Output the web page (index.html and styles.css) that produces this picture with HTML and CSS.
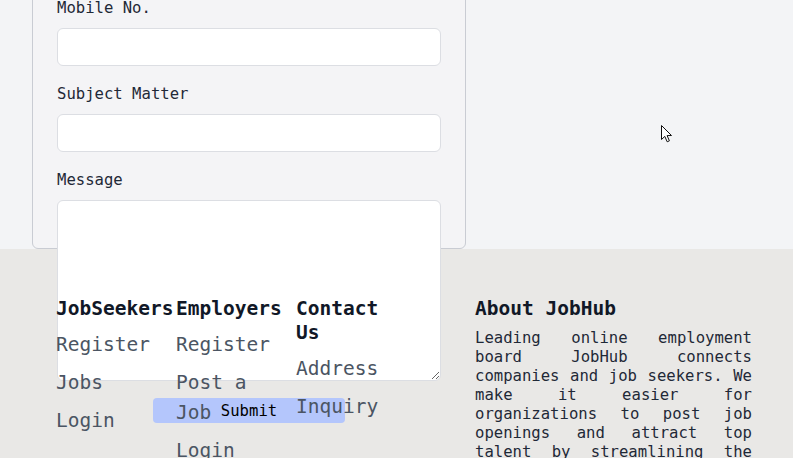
FILE: index.html
```html
<!DOCTYPE html>
<html lang="en">
<head>
<meta charset="utf-8">
<title>Contact - JobHub</title>
<link rel="stylesheet" href="styles.css">
</head>
<body>
<main class="contact">
  <form class="card">
    <div class="field">
      <label class="label" for="mobile">Mobile No.</label>
      <input class="input" id="mobile" type="text">
    </div>
    <div class="field">
      <label class="label" for="subject">Subject Matter</label>
      <input class="input" id="subject" type="text">
    </div>
    <div class="field">
      <label class="label" for="message">Message</label>
      <div class="area-wrap"><textarea class="area" id="message"></textarea></div>
    </div>
    <div class="actions"><button class="submit" type="button">Submit</button></div>
  </form>
</main>
<footer class="footer">
  <div class="cols">
    <div class="col">
      <h3 class="col-title">JobSeekers</h3>
      <ul class="links">
        <li><a href="#">Register</a></li>
        <li><a href="#">Jobs</a></li>
        <li><a href="#">Login</a></li>
      </ul>
    </div>
    <div class="col">
      <h3 class="col-title">Employers</h3>
      <ul class="links">
        <li><a href="#">Register</a></li>
        <li><a href="#">Post a Job</a></li>
        <li><a href="#">Login</a></li>
      </ul>
    </div>
    <div class="col">
      <h3 class="col-title">Contact Us</h3>
      <ul class="links">
        <li><a href="#">Address</a></li>
        <li><a href="#">Inquiry</a></li>
      </ul>
    </div>
  </div>
  <div class="about">
    <h3 class="col-title">About JobHub</h3>
    <p class="about-text">Leading online employment board JobHub connects companies and job seekers. We make it easier for organizations to post job openings and attract top talent by streamlining the hiring process for everyone involved.</p>
  </div>
</footer>
<svg class="cursor" width="13" height="20" viewBox="0 0 13 20" aria-hidden="true">
  <path d="M1.5 1.5 L1.5 15.5 L4.8 12.4 L7.2 17.8 L9.4 16.8 L7.1 11.6 L11.5 11.5 Z" fill="#fff" stroke="#111" stroke-width="1" stroke-linejoin="round"/>
</svg>
</body>
</html>
```

FILE: styles.css
```css
html, body {
  margin: 0;
  padding: 0;
}
body {
  font-family: "DejaVu Sans Mono", monospace;
  font-size: 15.6px;
  background: #e9e8e6;
  color: #1f2937;
  overflow: hidden;
  position: relative;
}
.contact {
  display: flow-root;
  background: #f3f4f6;
  padding-left: 32px;
  height: 249px;
}
.card {
  box-sizing: border-box;
  width: 434px;
  height: 278px;
  margin-top: -29px;
  padding: 24px 24px 0 24px;
  border: 1px solid #c9ccd3;
  border-radius: 6px;
  background: #f4f4f6;
}
.field {
  margin-bottom: 16px;
}
.label {
  display: block;
  line-height: 24px;
  margin-bottom: 8px;
  color: #1f2937;
}
.input {
  display: block;
  box-sizing: border-box;
  width: 100%;
  height: 38px;
  border: 1px solid #dcdee3;
  border-radius: 6px;
  background: #fff;
  font: inherit;
}
.area-wrap {
  line-height: 0;
}
.area {
  box-sizing: border-box;
  width: 100%;
  height: 181px;
  border: 1px solid #dcdee3;
  border-radius: 6px;
  background: #fff;
  vertical-align: top;
  font: inherit;
  margin: 0;
}
.card .field:last-of-type {
  margin-bottom: 0;
}
.actions {
  text-align: center;
  margin-top: 17px;
  line-height: 0;
}
.submit {
  box-sizing: border-box;
  width: 192px;
  height: 25px;
  border: none;
  border-radius: 4px;
  background: #b4c6fc;
  color: #000;
  font-family: "DejaVu Sans Mono", monospace;
  font-size: 15.6px;
  line-height: 26px;
  padding: 0;
  vertical-align: top;
}
.footer {
  display: flex;
  gap: 59px;
  padding: 48px 41px 40px 56px;
  background: #e9e8e6;
}
.cols {
  display: grid;
  grid-template-columns: 112px 112px 112px;
  column-gap: 8px;
  width: 360px;
}
.col-title {
  margin: 0 0 9px 0;
  font-size: 19.5px;
  line-height: 24px;
  font-weight: bold;
  color: #111827;
}
.links {
  list-style: none;
  margin: 0;
  padding: 0;
  display: flex;
  flex-direction: column;
  gap: 8px;
}
.links a {
  display: block;
  font-size: 19.5px;
  line-height: 30px;
  color: #4b5563;
  text-decoration: none;
}
.about {
  width: 277px;
  flex: none;
}
.about .col-title {
  margin-bottom: 8px;
}
.about-text {
  margin: 0;
  text-align: justify;
  line-height: 19px;
  color: #1f2937;
}
.cursor {
  position: absolute;
  left: 660px;
  top: 124px;
}
```
